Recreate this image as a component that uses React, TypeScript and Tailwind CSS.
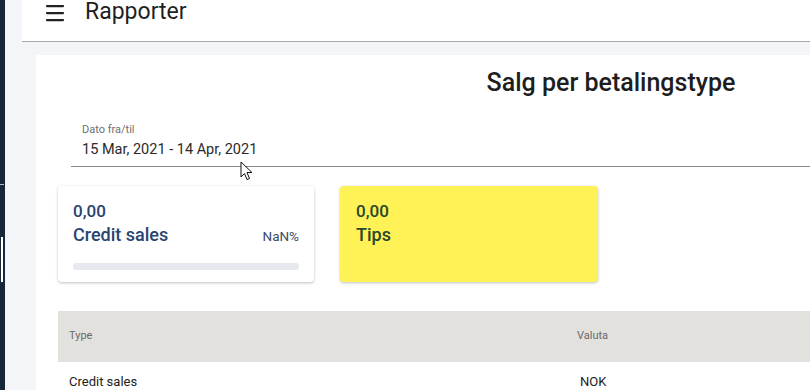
import { Menu } from "lucide-react"

const rows = [{ type: "Credit sales", currency: "NOK" }]

function StatCard({
  amount,
  label,
  percent,
  yellow,
}: {
  amount: string
  label: string
  percent?: string
  yellow?: boolean
}) {
  return (
    <div
      className={
        yellow
          ? "w-[258px] h-[96px] shrink-0 rounded-[4px] bg-[#fff257] px-[16px] pt-[14px] text-[#27472c] shadow-[0_1px_3px_rgba(0,0,0,0.25)]"
          : "w-[256px] h-[96px] shrink-0 rounded-[4px] bg-white px-[15px] pt-[14px] text-[#284470] shadow-[0_1px_3px_rgba(0,0,0,0.25)]"
      }
    >
      <div className="text-[17px] leading-[22px] font-medium">{amount}</div>
      <div className="flex items-baseline justify-between">
        <span className="text-[18px] leading-[26px] font-medium">{label}</span>
        {percent && <span className="text-[13.5px] text-[#3b4d66]">{percent}</span>}
      </div>
      {percent && <div className="mt-[15px] h-[7px] w-full rounded-full bg-[#e6e9ed]" />}
    </div>
  )
}

export default function App() {
  return (
    <div className="relative flex w-[810px] h-[390px] overflow-hidden bg-[#f4f5f9] font-['Roboto',sans-serif]">
      {/* sidebar edge */}
      <div className="relative w-[5px] shrink-0 bg-[#18263a]">
        <div className="absolute left-0 top-[184px] h-px w-[4px] bg-white/70" />
        <div className="absolute left-[1px] top-[237px] h-[45px] w-[2px] bg-white" />
      </div>

      <div className="flex flex-col flex-1 min-w-0">
        <header className="ml-[17px] h-[42px] shrink-0 flex items-start bg-white border-b border-[#a9a9a9]">
          <Menu className="ml-[21px] mt-[1px] h-[24px] w-[24px] text-[#222]" strokeWidth={2.25} />
          <h1 className="ml-[18px] text-[23px] leading-[24px] text-[#1f1f1f]">Rapporter</h1>
        </header>

        <main className="ml-[31px] mt-[13px] w-[1150px] flex-1 bg-white pt-[12px]">
          <h2 className="text-center text-[25px] leading-[32px] font-medium text-[#1e1e1e]">
            Salg per betalingstype
          </h2>

          <div className="ml-[35px] mt-[24px] border-b border-[#8a8a8a] pl-[11px] pb-[6px]">
            <div className="text-[11px] leading-[14px] text-[#6f6f6f]">Dato fra/til</div>
            <div className="mt-[3px] text-[14.5px] leading-[20px] text-[#2a2a2a]">15 Mar, 2021 - 14 Apr, 2021</div>
          </div>

          <div className="ml-[22px] mt-[19px] flex gap-[26px]">
            <StatCard amount="0,00" label="Credit sales" percent="NaN%" />
            <StatCard amount="0,00" label="Tips" yellow />
          </div>

          <div className="ml-[22px] mt-[29px]">
            <div className="flex h-[51px] items-center bg-[#e2e1dd] text-[11px] text-[#6a6a6a]">
              <div className="w-[519px] pl-[11px]">Type</div>
              <div>Valuta</div>
            </div>
            {rows.map((r) => (
              <div key={r.type} className="flex h-[40px] items-center text-[13px] text-[#222]">
                <div className="w-[522px] pl-[11px]">{r.type}</div>
                <div>{r.currency}</div>
              </div>
            ))}
          </div>
        </main>
      </div>

      {/* mouse pointer */}
      <svg className="absolute left-[240px] top-[161px]" width="14" height="20" viewBox="0 0 14 20">
        <path d="M1 1 L1 16 L4.5 12.5 L7 18.5 L9.5 17.5 L7 11.5 L12 11.5 Z" fill="white" stroke="#111" strokeWidth="1" strokeLinejoin="round" />
      </svg>
    </div>
  )
}
